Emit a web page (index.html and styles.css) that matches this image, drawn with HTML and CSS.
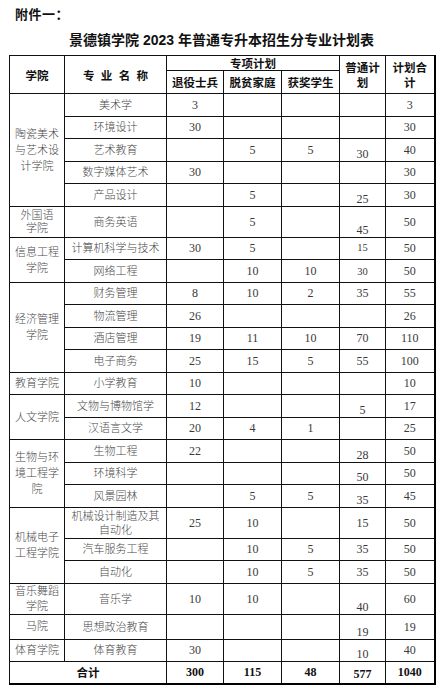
FILE: index.html
```html
<!DOCTYPE html>
<html lang="zh">
<head>
<meta charset="utf-8">
<title>景德镇学院 2023 年普通专升本招生分专业计划表</title>
<link rel="stylesheet" href="styles.css">
</head>
<body>
<div class="page">
  <div class="annex">附件一：</div>
  <h1 class="title">景德镇学院 2023 年普通专升本招生分专业计划表</h1>
  <table class="plan">
    <colgroup>
      <col class="c1"><col class="c2"><col class="c3"><col class="c4"><col class="c5"><col class="c6"><col class="c7">
    </colgroup>
    <thead>
      <tr class="h1">
        <th rowspan="2">学院</th>
        <th rowspan="2"><span class="spaced">专业名称</span></th>
        <th colspan="3">专项计划</th>
        <th rowspan="2" class="two">普通计<br>划</th>
        <th rowspan="2" class="two">计划合<br>计</th>
      </tr>
      <tr class="h2">
        <th>退役士兵</th>
        <th>脱贫家庭</th>
        <th>获奖学生</th>
      </tr>
    </thead>
    <tbody>
      <tr>
        <td rowspan="5" class="col l16">陶瓷美术<br>与艺术设<br>计学院</td>
        <td>美术学</td><td class="n">3</td><td></td><td></td><td></td><td class="n">3</td>
      </tr>
      <tr><td>环境设计</td><td class="n">30</td><td></td><td></td><td></td><td class="n">30</td></tr>
      <tr><td>艺术教育</td><td></td><td class="n">5</td><td class="n">5</td><td class="n low">30</td><td class="n">40</td></tr>
      <tr><td>数字媒体艺术</td><td class="n">30</td><td></td><td></td><td></td><td class="n">30</td></tr>
      <tr><td>产品设计</td><td></td><td class="n">5</td><td></td><td class="n low">25</td><td class="n">30</td></tr>
      <tr class="tall">
        <td class="col l13">外国语<br>学院</td>
        <td>商务英语</td><td></td><td class="n">5</td><td></td><td class="n low">45</td><td class="n">50</td>
      </tr>
      <tr>
        <td rowspan="2" class="col l16">信息工程<br>学院</td>
        <td>计算机科学与技术</td><td class="n">30</td><td class="n">5</td><td></td><td class="n s">15</td><td class="n">50</td>
      </tr>
      <tr><td>网络工程</td><td></td><td class="n">10</td><td class="n">10</td><td class="n s lowish">30</td><td class="n">50</td></tr>
      <tr>
        <td rowspan="4" class="col l16">经济管理<br>学院</td>
        <td>财务管理</td><td class="n">8</td><td class="n">10</td><td class="n">2</td><td class="n">35</td><td class="n">55</td>
      </tr>
      <tr><td>物流管理</td><td class="n">26</td><td></td><td></td><td></td><td class="n">26</td></tr>
      <tr><td>酒店管理</td><td class="n">19</td><td class="n">11</td><td class="n">10</td><td class="n">70</td><td class="n">110</td></tr>
      <tr><td>电子商务</td><td class="n">25</td><td class="n">15</td><td class="n">5</td><td class="n">55</td><td class="n">100</td></tr>
      <tr>
        <td class="col">教育学院</td>
        <td>小学教育</td><td class="n">10</td><td></td><td></td><td></td><td class="n">10</td>
      </tr>
      <tr>
        <td rowspan="2" class="col">人文学院</td>
        <td>文物与博物馆学</td><td class="n">12</td><td></td><td></td><td class="n low">5</td><td class="n">17</td>
      </tr>
      <tr><td>汉语言文学</td><td class="n">20</td><td class="n">4</td><td class="n">1</td><td></td><td class="n">25</td></tr>
      <tr>
        <td rowspan="3" class="col l16">生物与环<br>境工程学<br>院</td>
        <td>生物工程</td><td class="n">22</td><td></td><td></td><td class="n low">28</td><td class="n">50</td>
      </tr>
      <tr><td>环境科学</td><td></td><td></td><td></td><td class="n low">50</td><td class="n">50</td></tr>
      <tr><td>风景园林</td><td></td><td class="n">5</td><td class="n">5</td><td class="n low">35</td><td class="n">45</td></tr>
      <tr class="tall">
        <td rowspan="3" class="col l16">机械电子<br>工程学院</td>
        <td class="l14">机械设计制造及其<br>自动化</td><td class="n">25</td><td class="n">10</td><td></td><td class="n">15</td><td class="n">50</td>
      </tr>
      <tr><td>汽车服务工程</td><td></td><td class="n">10</td><td class="n">5</td><td class="n">35</td><td class="n">50</td></tr>
      <tr><td>自动化</td><td></td><td class="n">10</td><td class="n">5</td><td class="n">35</td><td class="n">50</td></tr>
      <tr class="tall">
        <td class="col l15">音乐舞蹈<br>学院</td>
        <td>音乐学</td><td class="n">10</td><td class="n">10</td><td></td><td class="n low">40</td><td class="n">60</td>
      </tr>
      <tr class="mid">
        <td class="col">马院</td>
        <td>思想政治教育</td><td></td><td></td><td></td><td class="n low">19</td><td class="n">19</td>
      </tr>
      <tr>
        <td class="col">体育学院</td>
        <td>体育教育</td><td class="n">30</td><td></td><td></td><td class="n low">10</td><td class="n">40</td>
      </tr>
      <tr class="total">
        <td colspan="2" class="sum">合计</td>
        <td class="n b">300</td><td class="n b">115</td><td class="n b">48</td><td class="n b lowish">577</td><td class="n b">1040</td>
      </tr>
    </tbody>
  </table>
</div>
</body>
</html>
```
FILE: styles.css
```css
html, body {
  margin: 0;
  padding: 0;
  background: #ffffff;
}

.page {
  width: 425px;
  padding: 6px 9px 0 9px;
}

.annex {
  font-family: "Noto Sans CJK SC", sans-serif;
  font-weight: 700;
  font-size: 13px;
  line-height: 16px;
  letter-spacing: 0.5px;
  color: #111;
  margin-left: 6px;
}

.title {
  margin: 9px 0 0 0;
  text-align: center;
  font-family: "Liberation Sans", "Noto Sans CJK SC", sans-serif;
  font-weight: 700;
  font-size: 14px;
  line-height: 18px;
  color: #111;
}

.plan {
  margin-top: 6px;
  width: 425px;
  border-collapse: collapse;
  table-layout: fixed;
  border-right: 2px solid #000;
  border-bottom: 2px solid #000;
}

.c1 { width: 55px; }
.c2 { width: 102px; }
.c3 { width: 57px; }
.c4 { width: 58px; }
.c5 { width: 58px; }
.c6 { width: 46px; }
.c7 { width: 49px; }

.plan th,
.plan td {
  border: 1px solid #111;
  padding: 0 1px;
  text-align: center;
  vertical-align: middle;
}

.plan th {
  font-family: "Noto Sans CJK SC", sans-serif;
  font-weight: 700;
  font-size: 11.5px;
  line-height: 14px;
  color: #111;
}

.h1 { height: 15px; }
.h2 { height: 23px; }

.plan th.two {
  line-height: 15px;
}

.spaced {
  letter-spacing: 0.55em;
  margin-right: -0.55em;
}

.plan td {
  font-family: "Liberation Serif", "Noto Sans CJK SC", serif;
  font-weight: 300;
  font-size: 11px;
  line-height: 14px;
  color: #4a4a4a;
}

.plan tbody tr { height: 22.5px; }
.plan tbody tr.tall { height: 31px; }
.plan tbody tr.mid { height: 25px; }
.plan tbody tr.total { height: 22px; }

.plan td.col { line-height: 15px; }
.plan td.l13 { line-height: 13px; }
.plan td.l14 { line-height: 14px; }
.plan td.l15 { line-height: 15px; }
.plan td.l16 { line-height: 16px; }

.plan td.n {
  font-size: 12px;
  font-weight: 400;
  color: #3a3a3a;
}

.plan td.s {
  font-size: 10.5px;
}

.plan td.low {
  vertical-align: bottom;
  line-height: 14px;
}

.plan td.lowish {
  padding-top: 3px;
}

.plan td.b {
  font-weight: 700;
  color: #111;
}

.plan td.sum {
  font-family: "Noto Sans CJK SC", sans-serif;
  font-weight: 700;
  font-size: 11.5px;
  color: #111;
}
```
